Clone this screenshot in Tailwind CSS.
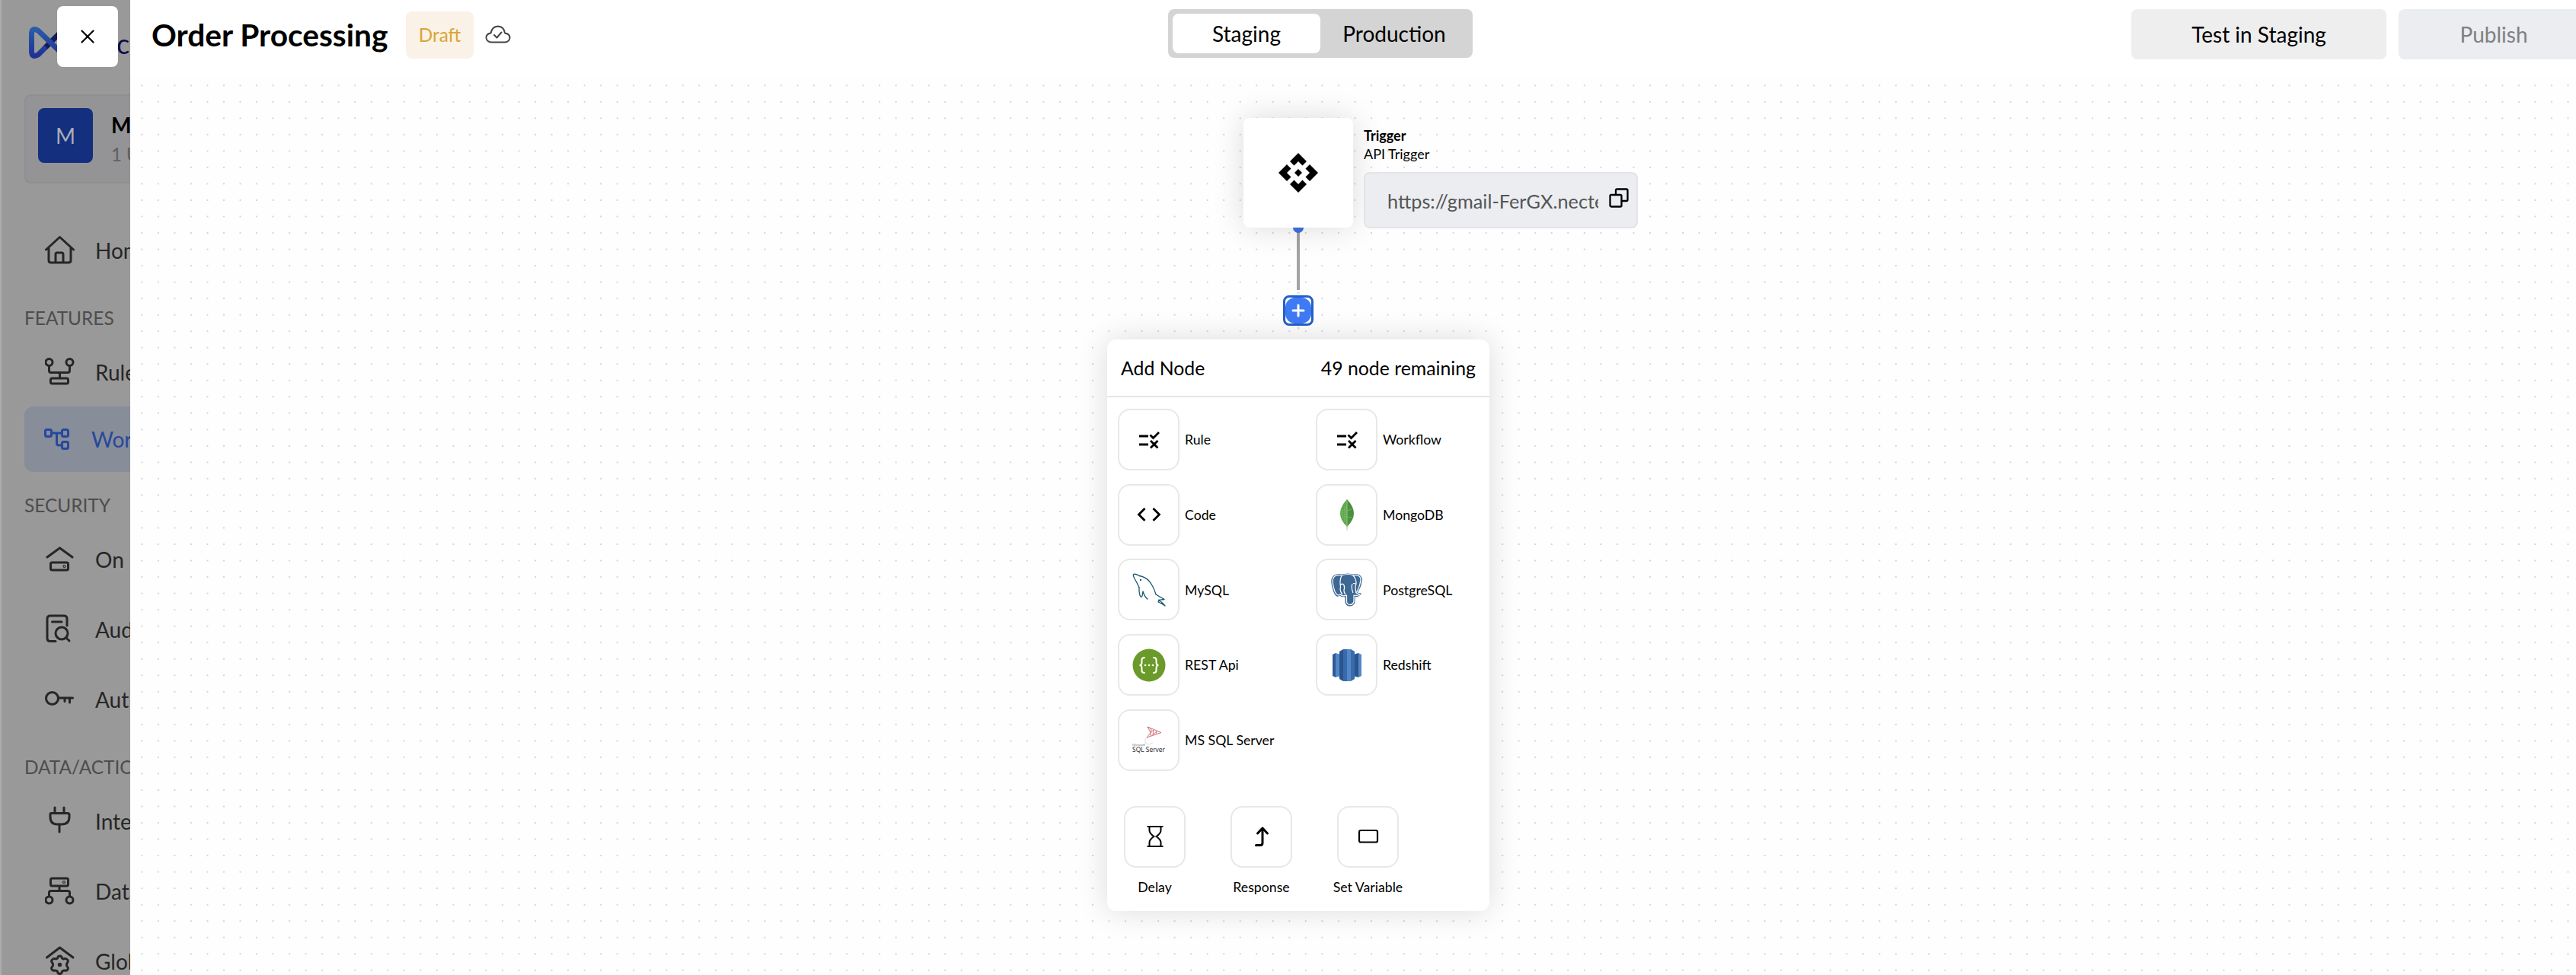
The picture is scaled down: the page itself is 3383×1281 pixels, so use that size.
<!DOCTYPE html>
<html lang="en">

<head>
    <meta charset="UTF-8">
    <meta name="viewport" content="width=device-width, initial-scale=1.0">
    <title>Order Processing</title>
    <script src="https://cdn.jsdelivr.net/npm/@tailwindcss/browser@4"></script>
</head>

<body class="flex h-[1281px] w-[3383px] overflow-hidden font-['Lato',sans-serif] text-black">
    <!-- Dimmed sidebar -->
    <aside class="relative flex h-full w-[171px] shrink-0 flex-col overflow-hidden whitespace-nowrap border-l-2 border-[#adadad] bg-[#999] text-[28px] text-[#262626]">
        <div class="flex h-[124px] shrink-0 items-start pl-[34px] pt-[33px]">
            <svg class="h-[46px] w-[80px] shrink-0" viewBox="0 0 80 46" fill="none" stroke-linejoin="round" stroke-linecap="round">
                <defs>
                    <linearGradient id="logo" x1="0" y1="0" x2="0" y2="1">
                        <stop offset="0" stop-color="#2a5ba8" />
                        <stop offset="1" stop-color="#1f3296" />
                    </linearGradient>
                </defs>
                <path d="M24 29 42 11" stroke="#151a5c" stroke-width="7" />
                <path d="M42 34 14.500 7.500Q5.500 2 5.500 12V34Q5.500 44 14.500 38.500L22 31" stroke="url(#logo)" stroke-width="7" />
            </svg>
            <span class="ml-[37px] mt-[6px] text-[36px] leading-[36px] text-[#0c0c4a]">cted</span>
        </div>
        <div class="ml-[30px] flex h-[117px] w-[300px] shrink-0 rounded-lg border-2 border-[#8f8f90] bg-[#949497] pl-4 pt-4">
            <div class="flex size-[72px] shrink-0 items-center justify-center rounded-lg bg-[#132f7d] text-[28px] text-[#a9adb8]">M</div>
            <div class="ml-6 flex flex-col">
                <span class="mt-[5px] text-[28px] font-bold leading-[34px] text-black">My</span>
                <span class="mt-[5px] text-[24px] font-medium leading-[34px] text-[#616161]">1 User</span>
            </div>
        </div>
        <nav class="mt-[60px] flex flex-col">
            <div class="flex h-[56px] items-center pl-[57px]">
                <svg class="size-[40px] shrink-0" viewBox="0 0 40 40" fill="none" stroke="#262626" stroke-width="3" stroke-linecap="round" stroke-linejoin="round">
                    <path d="M1.500 19 19.500 2.500 37.500 19M5 17V33Q5 36 8 36H31Q34 36 34 33V17M14 36V25Q14 23 16 23H22Q24 23 24 25V36" />
                </svg>
                <span class="ml-[26px]">Home</span>
            </div>
            <div class="mt-[18px] flex h-[86px] items-center pl-[30px] text-[24.4px] text-[#4d4d4d]">FEATURES</div>
            <div class="flex h-[56px] items-center pl-[57px]">
                <svg class="size-[40px] shrink-0" viewBox="0 0 40 40" fill="none" stroke="#262626" stroke-width="3" stroke-linejoin="round">
                    <circle cx="5.500" cy="7" r="4.500" />
                    <circle cx="32.500" cy="7" r="4.500" />
                    <path d="M5.500 12V18Q5.500 20.500 8 20.500H30Q32.500 20.500 32.500 18V12M19.500 21V28" />
                    <rect x="7.500" y="28" width="23" height="7" rx="2" />
                </svg>
                <span class="ml-[26px]">Rules</span>
            </div>
            <div class="ml-[30px] mt-[17px] flex h-[86px] w-[300px] items-center rounded-xl bg-[#878d99] pl-[26px] text-[#26489d]">
                <svg class="h-[30px] w-[34px] shrink-0" viewBox="0 0 34 30" fill="none" stroke="#26489d" stroke-width="3" stroke-linejoin="round">
                    <rect x="1.500" y="2.500" width="8" height="9" rx="2" />
                    <rect x="23.500" y="2.500" width="8" height="9" rx="2" />
                    <rect x="23.500" y="18.500" width="8" height="9" rx="2" />
                    <path d="M10 7H23M16.500 7V20Q16.500 23 19 23H23" />
                </svg>
                <span class="ml-[28px]">Workflows</span>
            </div>
            <div class="flex h-[88px] items-center pl-[30px] text-[24.4px] text-[#4d4d4d]">SECURITY</div>
            <div class="flex h-[54px] items-center pl-[57px]">
                <svg class="size-[40px] shrink-0" viewBox="0 0 40 40" fill="none" stroke="#262626" stroke-width="3" stroke-linecap="round" stroke-linejoin="round">
                    <path d="M3 17 19.500 5 36 17" />
                    <rect x="7.500" y="24" width="23" height="10" rx="2" />
                    <circle cx="25.500" cy="29" r=".6" />
                </svg>
                <span class="ml-[26px]">On Premise</span>
            </div>
            <div class="mt-[38px] flex h-[54px] items-center pl-[57px]">
                <svg class="size-[40px] shrink-0" viewBox="0 0 40 40" fill="none" stroke="#262626" stroke-width="3" stroke-linecap="round" stroke-linejoin="round">
                    <path d="M14 35.500H7Q3 35.500 3 31.500V6Q3 2 7 2H25Q29 2 29 6V15M9.500 10H22" />
                    <circle cx="22" cy="25" r="8" />
                    <path d="M28 31 32 35" />
                </svg>
                <span class="ml-[26px]">Audit Logs</span>
            </div>
            <div class="mt-[38px] flex h-[54px] items-center pl-[57px]">
                <svg class="size-[40px] shrink-0" viewBox="0 0 40 40" fill="none" stroke="#262626" stroke-width="3" stroke-linecap="round" stroke-linejoin="round">
                    <circle cx="9.500" cy="18.500" r="8" />
                    <path d="M18 18H36.500M26 18.500V22.500M32.500 18.500V24" />
                </svg>
                <span class="ml-[26px]">Auth</span>
            </div>
            <div class="flex h-[106px] items-center pl-[30px] pt-[18px] text-[24.4px] text-[#4d4d4d]">DATA/ACTIONS</div>
            <div class="flex h-[54px] items-center pl-[57px]">
                <svg class="size-[40px] shrink-0" viewBox="0 0 40 40" fill="none" stroke="#262626" stroke-width="3" stroke-linecap="round" stroke-linejoin="round">
                    <path d="M13 2V9M25 2V9M19 24V34" />
                    <path d="M8 9.500H30Q32 9.500 32 11.500V14Q32 24 22 24H16Q7 24 7 14V11Q7 9.500 8 9.500Z" />
                </svg>
                <span class="ml-[26px]">Integrations</span>
            </div>
            <div class="mt-[38px] flex h-[54px] items-center pl-[57px]">
                <svg class="size-[40px] shrink-0" viewBox="0 0 40 40" fill="none" stroke="#262626" stroke-width="3" stroke-linejoin="round">
                    <rect x="7.500" y="3" width="23" height="10" rx="2" />
                    <circle cx="25" cy="8" r=".6" />
                    <path d="M19 13V19M5.500 26V21.500Q5.500 19.500 8 19.500H30Q32.500 19.500 32.500 21.500V26" />
                    <circle cx="5.500" cy="31.500" r="4.500" />
                    <circle cx="32.500" cy="31.500" r="4.500" />
                </svg>
                <span class="ml-[26px]">Database</span>
            </div>
            <div class="mt-[38px] flex h-[54px] items-center pl-[57px]">
                <svg class="size-[40px] shrink-0" viewBox="0 0 40 40" fill="none" stroke="#262626" stroke-width="3" stroke-linecap="round" stroke-linejoin="round">
                    <path d="M2.500 15 19.500 2 37 15" />
                    <path d="M16.500 16Q17 13 19.500 13T22.500 16Q24 17.500 26 16.500 28.500 16 30 18.500 31 20.500 29 22.500 28 24.500 29 26.500 31 28.500 30 30.500 28.500 33 26 32 24 31.500 22.500 33.500 22 36.500 19.500 36.500T16.500 33.500Q15 31.500 13 32 10.500 33 9 30.500 8 28.500 10 26.500 11 24.500 10 22.500 8 20.500 9 18.500 10.500 16 13 16.500 15 17.500 16.500 16Z" />
                    <circle cx="19.500" cy="24.500" r="1.200" />
                </svg>
                <span class="ml-[26px]">Global</span>
            </div>
        </nav>
    </aside>

    <!-- Close button -->
    <button class="absolute left-[75px] top-[8px] flex size-[80px] items-center justify-center rounded-lg bg-white">
        <svg class="size-[20px]" viewBox="0 0 20 20" fill="none" stroke="#000" stroke-width="2.200" stroke-linecap="round">
            <path d="M2.500 2.500 17.500 17.500M17.500 2.500 2.500 17.500" />
        </svg>
    </button>

    <main class="relative flex h-full grow flex-col bg-[#fefefe]">
        <!-- Top bar -->
        <header class="relative z-10 flex h-[98px] shrink-0 items-start bg-white">
            <h1 class="ml-[28px] mt-[22px] w-[314px] whitespace-nowrap text-[40.7px] font-bold leading-[48px]">Order Processing</h1>
            <span class="ml-[20px] mt-[15px] flex h-[62px] w-[89px] items-center justify-center rounded-lg bg-[#faf2e6] text-[24.4px] text-[#daa535]">Draft</span>
            <svg class="ml-[15px] mt-[33px] h-[24px] w-[34px]" viewBox="0 0 34 24" fill="none" stroke="#444" stroke-width="2" stroke-linecap="round" stroke-linejoin="round">
                <path d="M8 22.500Q2 22 1.500 16.500 1.500 11.500 7.500 10.500 9 2 17 1.500 25 2 26 10.500 32.500 11.500 32.500 16.500 32 22 26.500 22.500Z" />
                <path d="M12 13 15.500 16.500 21.500 9.500" />
            </svg>
            <div class="ml-[863px] mt-[12px] flex h-[64px] w-[400px] rounded-lg bg-[#d4d4d4] p-[6px] text-[28px]">
                <div class="flex h-[52px] w-[194px] items-center justify-center rounded-lg bg-white">Staging</div>
                <div class="flex h-[52px] grow items-center justify-center">Production</div>
            </div>
            <button class="ml-[865px] mt-[12px] h-[66px] w-[335px] rounded-lg bg-[#eee] text-[28px]">Test in Staging</button>
            <button class="ml-[16px] mt-[12px] h-[66px] w-[250px] shrink-0 rounded-lg bg-[#ebedf1] text-[28px] text-[#808080]">Publish</button>
        </header>

        <!-- Flow canvas -->
        <section class="relative grow overflow-hidden">
            <svg class="absolute inset-0 size-full">
                <defs>
                    <pattern id="dots" x="4.600" y="3.500" width="21.528" height="21.528" patternUnits="userSpaceOnUse">
                        <circle cx="10.764" cy="10.764" r="1.100" fill="#cccccc" />
                    </pattern>
                </defs>
                <rect width="100%" height="100%" fill="url(#dots)" />
            </svg>

            <!-- Edge -->
            <div class="absolute left-[1532px] top-[204px] h-[79px] w-[4px] bg-[#a3a3a3]"></div>
            <div class="absolute left-[1527px] top-[194px] size-[14px] rounded-full bg-[#3f73e4]"></div>
            <div class="absolute left-[1532px] top-[285px] size-[4px] rounded-full bg-[#e6e6e6]"></div>
            <div class="absolute left-[1532px] top-[331px] size-[4px] rounded-full bg-[#e6e6e6]"></div>

            <!-- Trigger node -->
            <div class="absolute left-[1462px] top-[57px] flex size-[144px] items-center justify-center rounded-lg bg-white shadow-[0_0_40px_rgba(0,0,0,0.14)]">
                <svg class="size-[54px]" viewBox="0 0 54 54" fill="#000">
                    <path d="M27 1 38 12 32.500 17.500 27 12 21.500 17.500 16 12Z" />
                    <path d="M27 53 38 42 32.500 36.500 27 42 21.500 36.500 16 42Z" />
                    <path d="M1 27 12 16 17.500 21.500 12 27 17.500 32.500 12 38Z" />
                    <path d="M53 27 42 16 36.500 21.500 42 27 36.500 32.500 42 38Z" />
                    <path d="M27 22 32 27 27 32 22 27Z" />
                </svg>
            </div>
            <div class="absolute left-[1620px] top-[68px] flex w-[360px] flex-col text-[18px] leading-[24px]">
                <span class="font-bold">Trigger</span>
                <span>API Trigger</span>
                <div class="mt-[12px] flex h-[74px] items-center rounded-lg border-2 border-[#e3e4e7] bg-[#ebedf1] pl-[29px]">
                    <span class="mt-[2px] w-[277px] overflow-hidden whitespace-nowrap text-[25.3px] leading-[36px] text-[#555]">https://gmail-FerGX.nected.io</span>
                    <svg class="mb-[6px] ml-[14px] size-[26px] shrink-0" viewBox="0 0 26 26" fill="none" stroke="#000" stroke-width="2.300" stroke-linejoin="round">
                        <rect x="1.500" y="9" width="15" height="15.500" rx="1.500" />
                        <path d="M9 9V3Q9 1.500 10.500 1.500H23Q24.500 1.500 24.500 3V15.500Q24.500 17 23 17H17" />
                    </svg>
                </div>
            </div>

            <!-- Add button -->
            <button class="absolute left-[1514px] top-[290px] flex size-[40px] items-center justify-center rounded-lg border-[3px] border-[#2360c9] bg-white">
                <svg class="size-[34px] shrink-0" viewBox="0 0 34 34">
                    <rect width="34" height="34" rx="13" fill="#3f7af5" />
                    <path d="M17 10V24M10 17H24" stroke="#fff" stroke-width="3" stroke-linecap="round" />
                </svg>
            </button>

            <!-- Add node menu -->
            <div class="absolute left-[1283px] top-[348px] flex h-[751px] w-[502px] flex-col rounded-xl bg-white text-[17.7px] shadow-[0_0_40px_rgba(0,0,0,0.14)]">
                <div class="flex h-[76px] items-center justify-between border-b-2 border-[#e5e5e5] px-[18px] pt-[2px] text-[24.8px]">
                    <span>Add Node</span>
                    <span>49 node remaining</span>
                </div>
                <div class="grid grid-cols-[260px_1fr] gap-y-[17.700px] pl-[14px] pt-[15px]">
                    <div class="flex items-center gap-[7px]">
                        <div class="flex size-[81px] items-center justify-center rounded-2xl border-2 border-[#e8e8e8]">
                            <svg class="h-[24px] w-[28px]" viewBox="0 0 28 24" fill="none" stroke="#000" stroke-width="2.800">
                                <path d="M1 7H13M1 18H13M15.500 5.500 19.500 9.500 27 2M16 13 25.500 22.500M25.500 13 16 22.500" />
                            </svg>
                        </div>
                        <span class="pt-[2px]">Rule</span>
                    </div>
                    <div class="flex items-center gap-[7px]">
                        <div class="flex size-[81px] items-center justify-center rounded-2xl border-2 border-[#e8e8e8]">
                            <svg class="h-[24px] w-[28px]" viewBox="0 0 28 24" fill="none" stroke="#000" stroke-width="2.800">
                                <path d="M1 7H13M1 18H13M15.500 5.500 19.500 9.500 27 2M16 13 25.500 22.500M25.500 13 16 22.500" />
                            </svg>
                        </div>
                        <span class="pt-[2px]">Workflow</span>
                    </div>
                    <div class="flex items-center gap-[7px]">
                        <div class="flex size-[81px] items-center justify-center rounded-2xl border-2 border-[#e8e8e8]">
                            <svg class="h-[20px] w-[32px]" viewBox="0 0 32 20" fill="none" stroke="#000" stroke-width="2.800">
                                <path d="M10.500 2 2.500 10 10.500 18M21.500 2 29.500 10 21.500 18" />
                            </svg>
                        </div>
                        <span class="pt-[2px]">Code</span>
                    </div>
                    <div class="flex items-center gap-[7px]">
                        <div class="flex size-[81px] items-center justify-center rounded-2xl border-2 border-[#e8e8e8]">
                            <svg class="h-[42px] w-[20px]" viewBox="0 0 20 42">
                                <path d="M9.300 36H10.700L10.400 42H9.600Z" fill="#c9b9a6" />
                                <path d="M10 1Q-8 20 10 37Z" fill="#60a84c" />
                                <path d="M10 1Q28 20 10 37Z" fill="#4c9140" />
                                <path d="M10 3V37" stroke="#a6cf98" stroke-width=".8" />
                                <path d="M7 11V30M4 15V26" stroke="#a6d898" stroke-width=".8" stroke-dasharray="1.500 1.500" />
                                <path d="M10 16 16 14M10 24 17 25" stroke="#8fc080" stroke-width=".6" />
                            </svg>
                        </div>
                        <span class="pt-[2px]">MongoDB</span>
                    </div>
                    <div class="flex items-center gap-[7px]">
                        <div class="flex size-[81px] items-center justify-center rounded-2xl border-2 border-[#e8e8e8]">
                            <svg class="size-[44px]" viewBox="0 0 44 44" fill="none" stroke="#16586b" stroke-width="1.300" stroke-linejoin="round">
                                <path d="M9 19Q7 14 4 9 0 2 2 1.500 4 .5 9 3.500 20 5 26 16 29 21 31 28 36 31 42 34.500 37 35 34.500 35.500 39 38 43 43 38 39.500 34 38 36 36 34.500 35.500" />
                                <path d="M9 18Q8.500 24 10 29 11.500 33 13 30L14 24Q16 31 20.500 34.500" />
                                <circle cx="11" cy="9" r=".5" />
                            </svg>
                        </div>
                        <span class="pt-[2px]">MySQL</span>
                    </div>
                    <div class="flex items-center gap-[7px]">
                        <div class="flex size-[81px] items-center justify-center rounded-2xl border-2 border-[#e8e8e8]">
                            <svg class="size-[44px]" viewBox="0 0 44 44" fill="#3d6894" stroke="#3d6894" stroke-width="1" stroke-linejoin="round">
                                <path d="M15 2Q24 0 30 2 40 0 41.500 8 41 18 35 26L40.500 27Q38 31 32 31V38Q31 43 25.500 43 20.500 43 20 38V31Q14 31 12 29 8 33 5 25 1 14 2 8 4 0 15 2Z" />
                                <g fill="none" stroke="#fff" stroke-width="1.200">
                                    <path d="M15 3Q24 0 30 3 39 1 40 8 39 18 34 26L39 28Q36 30 31 29V37Q30 41.500 25.500 41.500 21.500 41 21.500 37V29Q16 31 13 28 9 31 6 24 2.500 14 3.500 8 5 1 15 3Z" />
                                    <path d="M15 3Q12 9 13.500 18 12 24 16 28M30 3Q36 10 33 18 33 22 34 26M20 28Q17 25 18.500 20 19 15 16 14 14 14 13.500 16M29 14Q27 19 30 26M30 13.500 33.500 14" />
                                </g>
                            </svg>
                        </div>
                        <span class="pt-[2px]">PostgreSQL</span>
                    </div>
                    <div class="flex items-center gap-[7px]">
                        <div class="flex size-[81px] items-center justify-center rounded-2xl border-2 border-[#e8e8e8]">
                            <svg class="size-[44px]" viewBox="0 0 44 44" fill="none" stroke="#fff" stroke-width="2" stroke-linecap="round">
                                <circle cx="22" cy="22" r="21.500" fill="#6a9a29" stroke="none" />
                                <path d="M16 12Q12.500 12 12.500 15V18Q12.500 22 9.500 22 12.500 22 12.500 26V29Q12.500 32 16 32M28 12Q31.500 12 31.500 15V18Q31.500 22 34.500 22 31.500 22 31.500 26V29Q31.500 32 28 32" />
                                <path d="M17 22H17.100M22 22H22.100M27 22H27.100" stroke-width="2.600" />
                            </svg>
                        </div>
                        <span class="pt-[2px]">REST Api</span>
                    </div>
                    <div class="flex items-center gap-[7px]">
                        <div class="flex size-[81px] items-center justify-center rounded-2xl border-2 border-[#e8e8e8]">
                            <svg class="h-[44px] w-[40px]" viewBox="0 0 40 44">
                                <path d="M1 8 5 6V38L1 36Z" fill="#2e5a96" />
                                <path d="M5 6 12 8V36L5 38Z" fill="#5487c5" />
                                <path d="M39 8 35 6V38L39 36Z" fill="#5487c5" />
                                <path d="M35 6 28 8V36L35 38Z" fill="#2c548d" />
                                <path d="M10 4 15 1V43L10 40Z" fill="#2c548d" />
                                <path d="M15 1H20V43H15Z" fill="#386bab" />
                                <path d="M20 1H25V43H20Z" fill="#5487c5" />
                                <path d="M25 1 30 4V40L25 43Z" fill="#386bab" />
                            </svg>
                        </div>
                        <span class="pt-[2px]">Redshift</span>
                    </div>
                    <div class="flex items-center gap-[7px]">
                        <div class="flex size-[81px] items-center justify-center rounded-2xl border-2 border-[#e8e8e8]">
                            <svg class="size-[44px]" viewBox="0 0 44 44" fill="none" stroke="#c4545c" stroke-width=".8">
                                <path d="M20 5 38 12.500 19 19 24 12.500ZM24 12.500 28 9 27 16 32 10.500 31 14.500M20 5 25 8 24 17" />
                                <path d="M19 19Q15 23 18 27 22 29 27 26" stroke="#d5d5d5" />
                                <text x="0" y="30" font-size="4" fill="#777" stroke="none" font-family="Lato">Microsoft</text>
                                <text x="0" y="38" font-size="9.500" fill="#222" stroke="none" font-family="Open Sans" textLength="43" lengthAdjust="spacingAndGlyphs">SQL Server</text>
                            </svg>
                        </div>
                        <span class="pt-[2px]">MS SQL Server</span>
                    </div>
                </div>
                <div class="mt-[46px] grid grid-cols-[repeat(3,140px)]">
                    <div class="flex w-[125px] flex-col items-center">
                        <div class="flex size-[81px] items-center justify-center rounded-2xl border-2 border-[#e8e8e8]">
                            <svg class="h-[30px] w-[22px]" viewBox="0 0 22 30" fill="none" stroke="#000" stroke-width="2">
                                <path d="M.5 2H21.500M.5 28H21.500M3.500 2V7Q3.500 11 9.500 15 3.500 19 3.500 23V28M18.500 2V7Q18.500 11 12.500 15 18.500 19 18.500 23V28" />
                            </svg>
                        </div>
                        <span class="mt-[15px] leading-[22px]">Delay</span>
                    </div>
                    <div class="flex w-[125px] flex-col items-center">
                        <div class="flex size-[81px] items-center justify-center rounded-2xl border-2 border-[#e8e8e8]">
                            <svg class="h-[28px] w-[20px]" viewBox="0 0 20 28" fill="none" stroke="#000" stroke-width="3" stroke-linecap="round" stroke-linejoin="round">
                                <path d="M4.500 10 11 3 17.500 10M11 3V22.500Q11 25.500 8 25.500H2.500" />
                            </svg>
                        </div>
                        <span class="mt-[15px] leading-[22px]">Response</span>
                    </div>
                    <div class="flex w-[125px] flex-col items-center">
                        <div class="flex size-[81px] items-center justify-center rounded-2xl border-2 border-[#e8e8e8]">
                            <svg class="h-[20px] w-[28px]" viewBox="0 0 28 20" fill="none" stroke="#000" stroke-width="2.200">
                                <rect x="2" y="2" width="24" height="15.500" rx="2" />
                            </svg>
                        </div>
                        <span class="mt-[15px] leading-[22px]">Set Variable</span>
                    </div>
                </div>
            </div>
        </section>
    </main>
</body>

</html>
